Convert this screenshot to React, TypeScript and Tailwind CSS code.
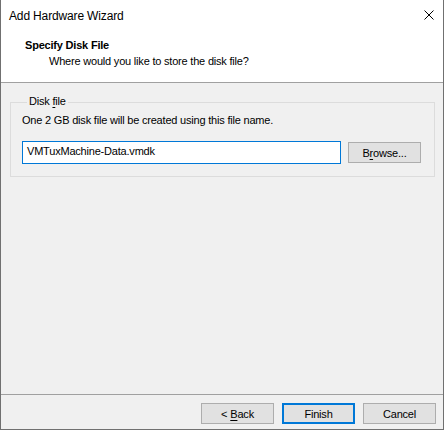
function Btn({ children, focused = false }: { children: React.ReactNode; focused?: boolean }) {
  return (
    <button
      type="button"
      className={
        "w-[73px] h-[21px] bg-[#e1e1e1] text-[11px] leading-[14px] tracking-[-0.2px] text-black flex items-center justify-center " +
        (focused ? "border-2 border-[#0078d7]" : "border border-[#adadad]")
      }
    >
      {children}
    </button>
  );
}

export default function App() {
  return (
    <div
      className="w-[444px] h-[430px] flex flex-col bg-[#f0f0f0] border-x border-b border-[#707070] text-black select-none"
      style={{ fontFamily: '"Liberation Sans", Arial, sans-serif' }}
    >
      {/* Title bar */}
      <div className="h-[31px] shrink-0 bg-white flex items-center justify-between pl-[8px] pr-[9px]">
        <span className="text-[12px] leading-[16px] tracking-[-0.15px]">Add Hardware Wizard</span>
        <svg width="10" height="10" viewBox="0 0 10 10" className="mt-[-1px]">
          <path d="M0.5 0.5 L9.5 9.5 M9.5 0.5 L0.5 9.5" stroke="#000" strokeWidth="1" fill="none" />
        </svg>
      </div>

      {/* Header */}
      <div className="h-[52px] shrink-0 bg-white border-b border-[#a0a0a0] pt-[7px] text-[11px] leading-[14px] tracking-[-0.2px]">
        <div className="pl-[24px] font-bold">Specify Disk File</div>
        <div className="pl-[48px] mt-[2px]">Where would you like to store the disk file?</div>
      </div>

      {/* Body */}
      <div className="flex-1 pl-[9px] pr-[8px] pt-[11px] text-[11px] leading-[14px] tracking-[-0.2px]">
        <fieldset className="border border-[#dcdcdc] pl-[11px] pr-[13px] pb-[12px]">
          <legend className="ml-[5px] px-[2px] pb-[3px]">
            Disk <span className="underline underline-offset-2">f</span>ile
          </legend>
          <div className="mt-[2px]">One 2 GB disk file will be created using this file name.</div>
          <div className="mt-[14px] flex items-center gap-[7px]">
            <div className="w-[319px] h-[23px] bg-white border border-[#0078d7] pl-[4px] pb-[3px] flex items-center">
              VMTuxMachine-Data.vmdk
            </div>
            <Btn>
              B<span className="underline underline-offset-2">r</span>owse...
            </Btn>
          </div>
        </fieldset>
      </div>

      {/* Footer */}
      <div className="h-[35px] shrink-0 border-t border-[#a0a0a0] pt-[8px] pr-[7px] flex justify-end items-start gap-[8px]">
        <Btn>
          &lt; <span className="underline underline-offset-2 ml-[3px]">B</span>ack
        </Btn>
        <Btn focused>Finish</Btn>
        <Btn>Cancel</Btn>
      </div>
    </div>
  );
}
